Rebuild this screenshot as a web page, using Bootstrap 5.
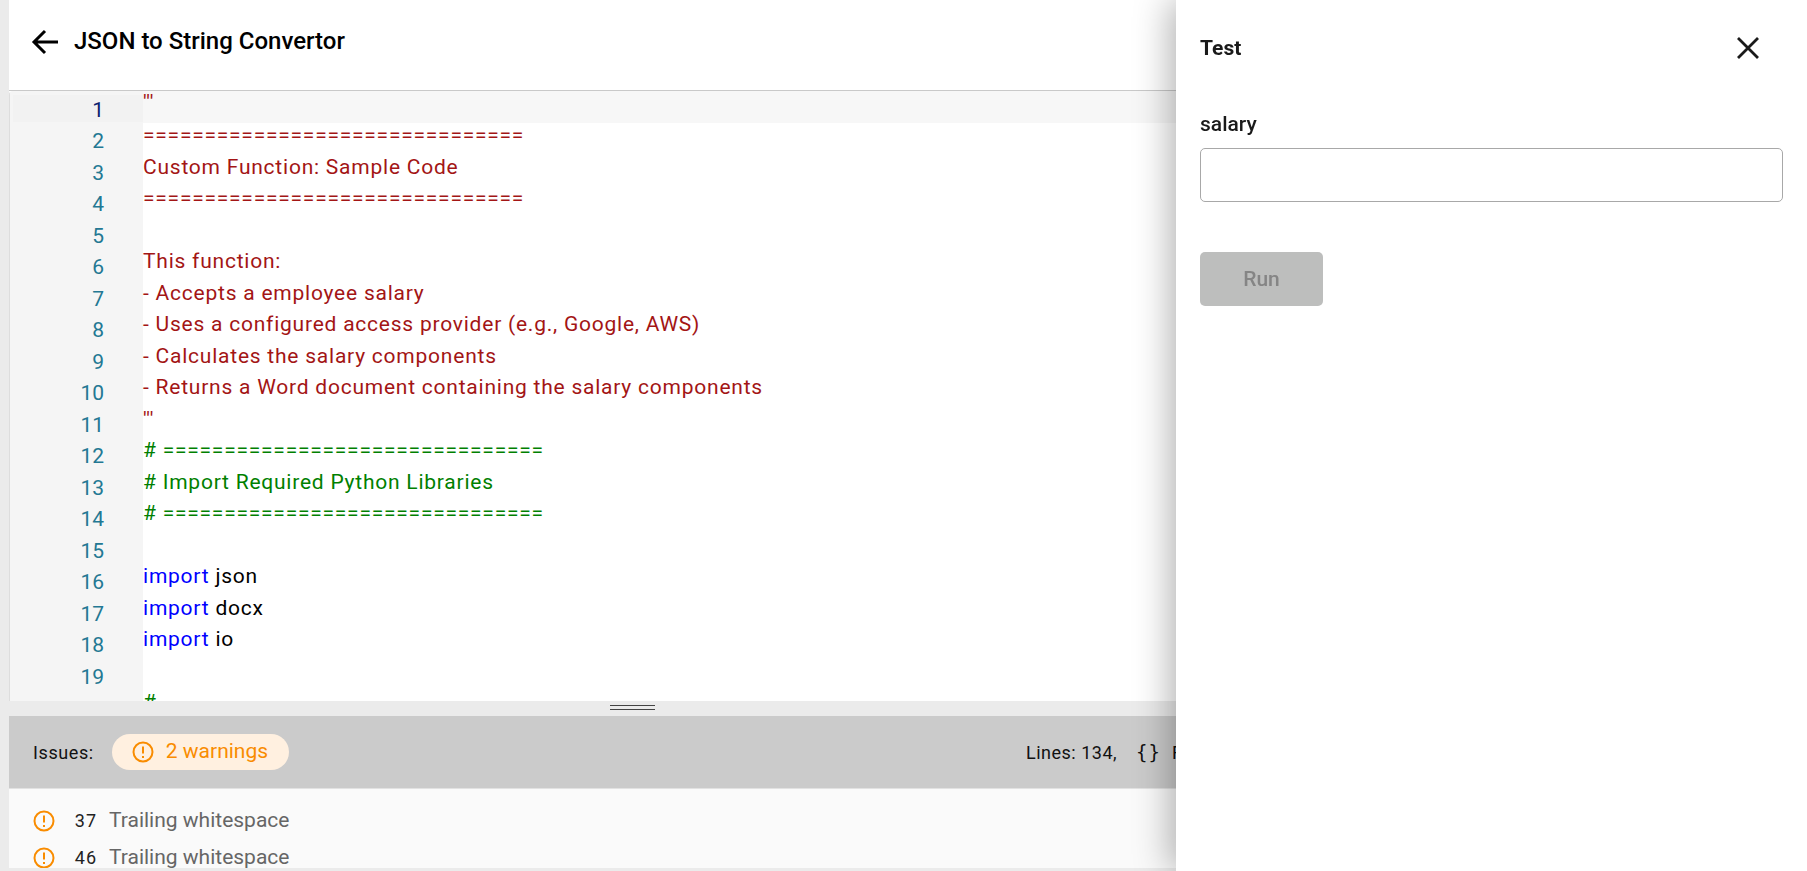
<!DOCTYPE html>
<html lang="en"><head><meta charset="utf-8"><title>JSON to String Convertor</title>
<link href="https://cdn.jsdelivr.net/npm/bootstrap@5.3.0/dist/css/bootstrap.min.css" rel="stylesheet">
<style>
html,body{height:100%;overflow:hidden}
body{font-family:Roboto,"Liberation Sans",sans-serif;background:#ebebeb;color:#1d1d1d}
.app-main{margin-left:9px;height:868px;width:1798px;background:#fff;overflow:hidden}
.page-head{height:91px;border-bottom:1px solid #c9c9c9;padding:0 0 6px 22px;gap:15px;background:#fff}
.page-head h1{font-size:24px;font-weight:500;color:#000;margin:-3px 0 0;line-height:30px}
.editor-box{height:610px;overflow:hidden;position:relative;background:#fff;border-top-left-radius:4px}
.gutter{width:134px;flex:none;background:#f5f5f5;box-shadow:inset 1px 0 #ddd;font-size:21px;line-height:31.5px;color:#237893;text-align:right;padding:4px 39px 0 0}
.gutter .on{color:#0b216f;background:#f2f2f2;margin:0 -39px 4px 4px;padding-right:39px;height:27px;line-height:30px}
.code-area{flex:1;font-size:21px;line-height:31.5px;letter-spacing:.77px;white-space:pre;position:relative}
.code-area .cur{background:#f7f7f7;height:32px;margin-bottom:-3px;line-height:23px}
.c-str{color:#a31515}.c-com{color:#008000}.c-key{color:#0000ff}.c-pln{color:#000}
.split-bar{height:15px;background:#ebebeb;position:relative}
.split-bar i{display:block;position:absolute;left:601px;top:4px;width:45px;height:5px;border-top:1px solid #444;border-bottom:1px solid #444}
.issue-bar{height:73px;background:#cbcbcb;border-bottom:1px solid #e2e2e2;padding-left:24px;font-size:18px;color:#111}
.issue-lab{letter-spacing:.6px}
.warn-pill{background:#fff0e0;color:#f98c00;border-radius:18px;height:36px;width:177px;margin-left:18px;padding-left:20px;gap:12px;font-size:21px}
.stat-txt{position:absolute;left:1017px;top:0;height:73px;white-space:nowrap;letter-spacing:.5px}
.stat-txt b{font-family:"DejaVu Sans Mono",monospace;font-weight:400;margin:0 11px 0 19px;font-size:19px;letter-spacing:1px}
.issue-wrap{position:relative}
.issue-rows{background:#fafafa;height:79px;overflow:hidden;padding:13px 0 0 24px;font-size:21px;color:#666;line-height:37px}
.issue-rows .n{font-size:18px;color:#222;width:33px;text-align:right;margin:0 12px 0 0;letter-spacing:1px}
.issue-rows svg{margin-right:9px}
.drawer{position:fixed;right:0;top:0;bottom:0;width:631px;background:#fff;box-shadow:-6px 0 34px rgba(0,0,0,.3);padding:0 24px}
.drawer-head{height:95px;font-size:21px;font-weight:700;color:#1a1a1a;margin-bottom:15px;padding-top:2px}
.drawer-x{margin:-2px 22px 0 0}
.field-lab{font-size:21px;font-weight:500;margin:0 0 10px;line-height:28px;color:#1a1a1a}
.field-in{height:54px;border:1px solid #a8a8a8;border-radius:5px;box-shadow:none}
.run-btn,.run-btn:disabled{width:123px;height:54px;margin-top:50px;padding-top:8px;background:#bdbebd;border:0;border-radius:5px;color:#858585;font-size:21px;font-weight:500;opacity:1}
</style></head>
<body>
<div class="app-main">
 <div class="page-head d-flex align-items-center">
  <svg width="28" height="28" viewBox="0 0 28 28" fill="none" stroke="#000" stroke-width="3"><path d="M27 14H3M14 3 3 14l11 11"/></svg>
  <h1>JSON to String Convertor</h1>
 </div>
 <div class="editor-box d-flex">
  <div class="gutter"><div class="on">1</div><div>2</div><div>3</div><div>4</div><div>5</div><div>6</div><div>7</div><div>8</div><div>9</div><div>10</div><div>11</div><div>12</div><div>13</div><div>14</div><div>15</div><div>16</div><div>17</div><div>18</div><div>19</div></div>
  <div class="code-area"><div class="cur c-str">'''</div><div class="c-str">===============================</div><div class="c-str">Custom Function: Sample Code</div><div class="c-str">===============================</div><div>&nbsp;</div><div class="c-str">This function:</div><div class="c-str">- Accepts a employee salary</div><div class="c-str">- Uses a configured access provider (e.g., Google, AWS)</div><div class="c-str">- Calculates the salary components</div><div class="c-str">- Returns a Word document containing the salary components</div><div class="c-str">'''</div><div class="c-com"># ===============================</div><div class="c-com"># Import Required Python Libraries</div><div class="c-com"># ===============================</div><div>&nbsp;</div><div class="c-pln"><span class="c-key">import</span> json</div><div class="c-pln"><span class="c-key">import</span> docx</div><div class="c-pln"><span class="c-key">import</span> io</div><div>&nbsp;</div><div class="c-com">#</div></div>
 </div>
 <div class="split-bar"><i></i></div>
 <div class="issue-wrap">
  <div class="issue-bar d-flex align-items-center">
   <span class="issue-lab">Issues:</span>
   <span class="warn-pill d-flex align-items-center">
    <svg width="22" height="22" viewBox="0 0 22 22" fill="none" stroke="#f98c00" stroke-width="2"><circle cx="11" cy="11" r="9.5"/><path d="M11 5.5v7M11 15v2"/></svg>2 warnings</span>
   <span class="stat-txt d-flex align-items-center">Lines: 134,<b>{}</b>Format</span>
  </div>
  <div class="issue-rows">
   <div class="d-flex align-items-center"><svg width="22" height="22" viewBox="0 0 22 22" fill="none" stroke="#f98c00" stroke-width="2"><circle cx="11" cy="11" r="9.5"/><path d="M11 5.5v7M11 15v2"/></svg><span class="n">37</span>Trailing whitespace</div>
   <div class="d-flex align-items-center"><svg width="22" height="22" viewBox="0 0 22 22" fill="none" stroke="#f98c00" stroke-width="2"><circle cx="11" cy="11" r="9.5"/><path d="M11 5.5v7M11 15v2"/></svg><span class="n">46</span>Trailing whitespace</div>
  </div>
 </div>
</div>
<aside class="drawer">
 <div class="drawer-head d-flex align-items-center justify-content-between">
  <span>Test</span>
  <svg class="drawer-x" width="26" height="26" viewBox="0 0 26 26" fill="none" stroke="#1a1a1a" stroke-width="2.8"><path d="M3 3l20 20M23 3 3 23"/></svg>
 </div>
 <label class="form-label field-lab d-block" for="sal">salary</label>
 <input id="sal" class="form-control field-in" type="text">
 <button class="btn run-btn d-block" disabled>Run</button>
</aside>
</body></html>
